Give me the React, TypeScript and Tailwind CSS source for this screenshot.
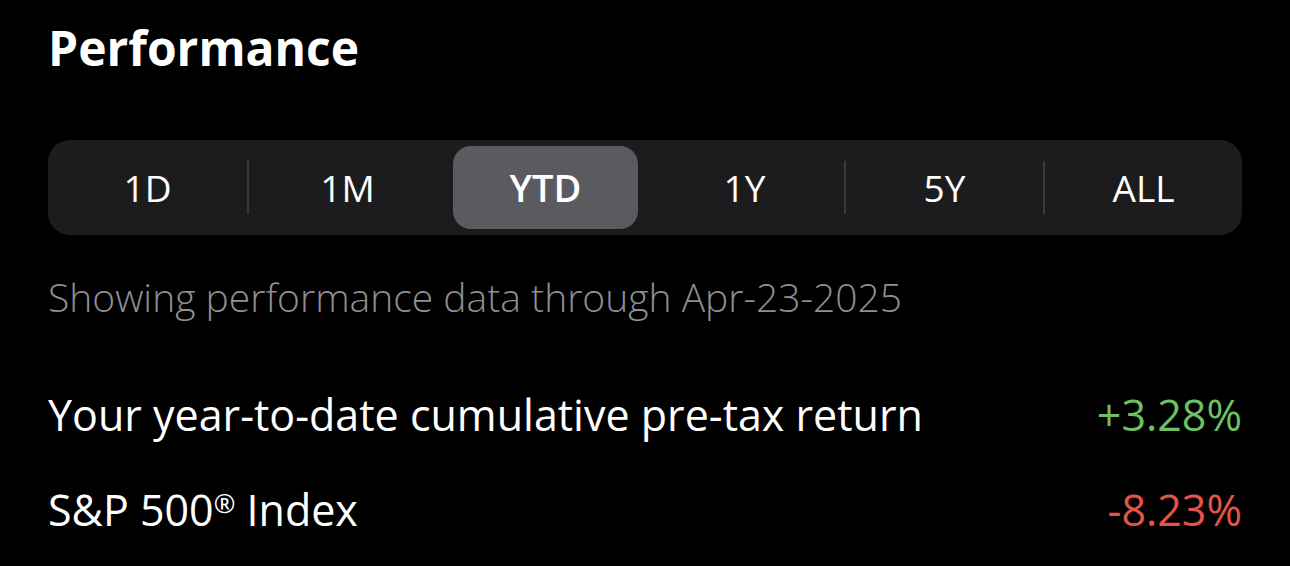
import { useState } from "react";

const ranges = ["1D", "1M", "YTD", "1Y", "5Y", "ALL"];

export default function App() {
  const [active, setActive] = useState("YTD");
  const idx = ranges.indexOf(active);

  return (
    <div className="min-h-[566px] w-[1290px] bg-black px-[48px] pt-[20px] font-['Open_Sans',sans-serif] text-white">
      <h1 className="text-[48px] font-bold leading-[56px]">Performance</h1>

      <div className="mt-[64px] flex h-[95px] rounded-[22px] bg-[#1c1c1e]">
        {ranges.map((r, i) => {
          const selected = r === active;
          const showDivider = i > 0 && i !== idx && i !== idx + 1;
          return (
            <div key={r} className="relative flex flex-1 items-center">
              {showDivider && <div className="h-[53px] w-[2px] bg-[#3a3a3c]" />}
              <button
                onClick={() => setActive(r)}
                className={
                  selected
                    ? "mx-[7px] flex h-[83px] flex-1 items-center justify-center rounded-[18px] bg-[#5b5a5f] text-[38px] font-semibold"
                    : "mx-[7px] flex h-[83px] flex-1 items-center justify-center text-[37px]"
                }
              >
                {r}
              </button>
            </div>
          );
        })}
      </div>

      <p className="mt-[38px] text-[39px] font-light leading-[48px] text-[#8e8e93]">
        Showing performance data through Apr-23-2025
      </p>

      <div className="mt-[68px] flex items-center justify-between text-[43px] leading-[52px]">
        <span>Your year-to-date cumulative pre-tax return</span>
        <span className="text-[#6fbf63]">+3.28%</span>
      </div>
      <div className="mt-[43px] flex items-center justify-between text-[43px] leading-[52px]">
        <span>
          S&amp;P 500<sup className="text-[26px]">®</sup> Index
        </span>
        <span className="text-[#e5534b]">-8.23%</span>
      </div>
    </div>
  );
}
